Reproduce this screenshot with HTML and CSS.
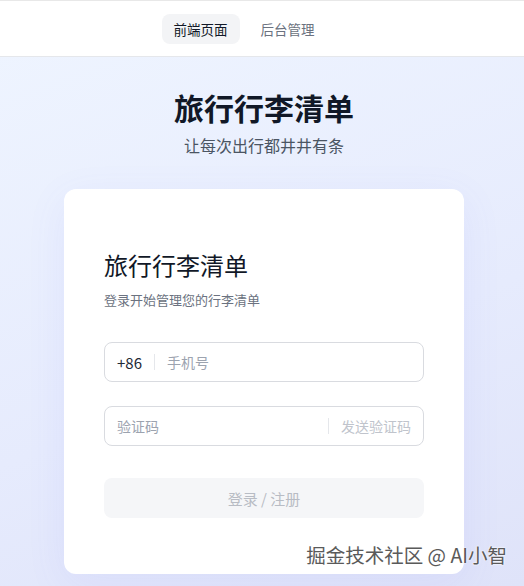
FILE: index.html
```html
<!DOCTYPE html>
<html lang="zh-CN">

<head>
    <meta charset="UTF-8">
    <meta name="viewport" content="width=device-width, initial-scale=1.0">
    <title>旅行行李清单</title>
    <link rel="stylesheet" href="styles.css">
</head>

<body>
    <!-- Top Nav -->
    <nav class="top-nav">
        <a class="nav-tab active">前端页面</a>
        <a class="nav-tab">后台管理</a>
    </nav>

    <main class="page">
        <header class="page-head">
            <h1>旅行行李清单</h1>
            <p>让每次出行都井井有条</p>
        </header>

        <!-- Login Card -->
        <section class="login-card">
            <h2>旅行行李清单</h2>
            <p class="login-sub">登录开始管理您的行李清单</p>

            <div class="field">
                <span class="prefix">+86</span>
                <span class="divider"></span>
                <input type="text" placeholder="手机号">
            </div>

            <div class="field code-field">
                <input type="text" placeholder="验证码">
                <span class="divider"></span>
                <span class="send-code">发送验证码</span>
            </div>

            <button class="submit-button" disabled>登录 / 注册</button>
        </section>
    </main>

    <div class="watermark">掘金技术社区 @ AI小智</div>
</body>

</html>
```

FILE: styles.css
```css
* {
    box-sizing: border-box;
}

body {
    margin: 0;
    font-family: "Noto Sans CJK SC", "Noto Sans", sans-serif;
    color: #111827;
    background: linear-gradient(160deg, #eff5ff 0%, #e6ebfd 60%, #dfe3f9 100%);
    min-height: 100vh;
    overflow: hidden;
}

/* Top Nav */
.top-nav {
    height: 57px;
    background: #fff;
    border-top: 1px solid #e8e8e8;
    border-bottom: 1px solid #e5e7eb;
    display: flex;
    justify-content: center;
    align-items: center;
    gap: 9px;
    padding-right: 36px;
}

.nav-tab {
    height: 30px;
    line-height: 30px;
    padding: 0 12px;
    border-radius: 8px;
    font-size: 13.5px;
    color: #6b7280;
    cursor: pointer;
}

.nav-tab.active {
    background: #f3f4f6;
    color: #111827;
}

/* Page Header */
.page {
    display: flex;
    flex-direction: column;
    align-items: center;
    padding-left: 4px;
}

.page-head {
    text-align: center;
    margin-top: 29px;
}

.page-head h1 {
    margin: 0;
    font-size: 30px;
    line-height: 42px;
    font-weight: 700;
    color: #111827;
}

.page-head p {
    margin: 5px 0 0;
    font-size: 16px;
    line-height: 24px;
    color: #4b5563;
}

/* Login Card */
.login-card {
    width: 400px;
    margin-top: 32px;
    background: #fff;
    border-radius: 12px;
    padding: 60px 40px 56px;
    box-shadow: 0 10px 40px rgba(99, 102, 241, 0.08);
}

.login-card h2 {
    margin: 0;
    font-size: 24px;
    line-height: 32px;
    font-weight: 400;
    color: #111827;
}

.login-sub {
    margin: 9px 0 0;
    font-size: 13px;
    line-height: 20px;
    color: #6b7280;
}

.field {
    height: 40px;
    border: 1px solid #d9dbe0;
    border-radius: 8px;
    display: flex;
    align-items: center;
    padding: 0 12px;
    margin-top: 32px;
}

.code-field {
    margin-top: 24px;
}

.field input {
    flex: 1;
    min-width: 0;
    border: none;
    outline: none;
    background: transparent;
    font-family: inherit;
    font-size: 14px;
    color: #111827;
    padding: 0;
}

.field input::placeholder {
    color: #9ca3af;
}

.prefix {
    font-size: 15px;
    color: #1f2937;
}

.divider {
    width: 1px;
    height: 16px;
    background: #e5e7eb;
    margin: 0 12px;
}

.send-code {
    font-size: 14px;
    color: #c0c4cc;
}

.submit-button {
    width: 100%;
    height: 40px;
    margin-top: 32px;
    border: none;
    border-radius: 8px;
    background: #f5f6f8;
    color: #b8bcc4;
    font-family: inherit;
    font-size: 15px;
    cursor: not-allowed;
}

/* Watermark */
.watermark {
    position: absolute;
    right: 17px;
    bottom: 17px;
    font-size: 19.5px;
    color: #5a5a5a;
    text-shadow: 0 0 2px #fff, 0 0 2px #fff;
}
```
